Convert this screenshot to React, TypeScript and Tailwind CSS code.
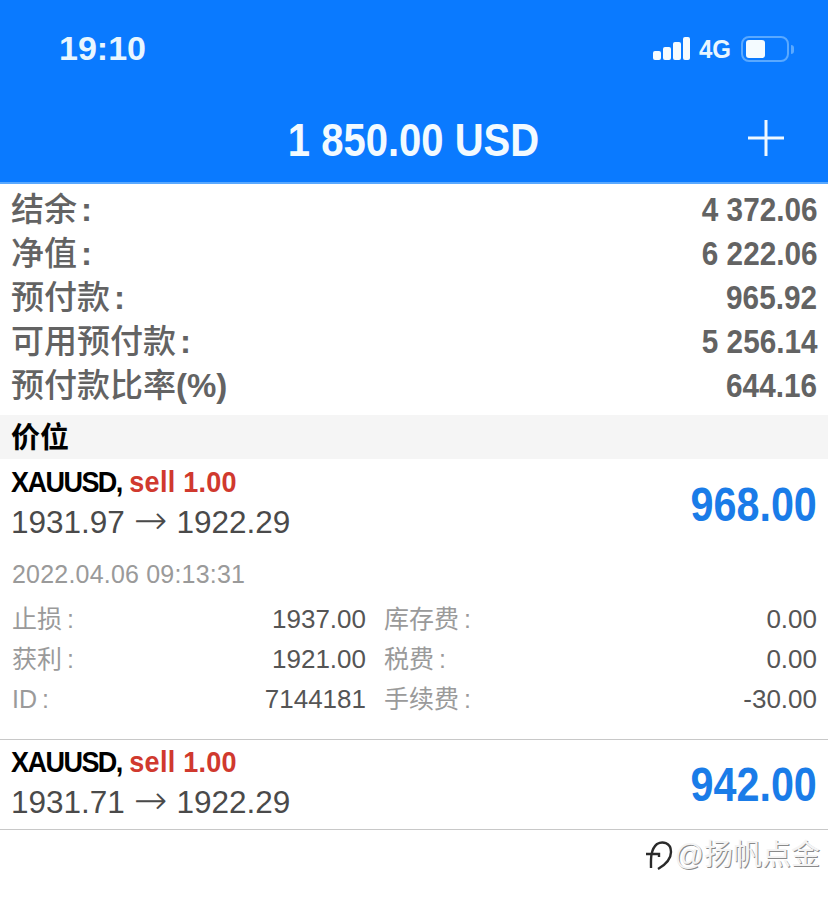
const summary = [
  ['结余', '4 372.06'],
  ['净值', '6 222.06'],
  ['预付款', '965.92'],
  ['可用预付款', '5 256.14'],
]

const details = [
  ['止损', '1937.00', '库存费', '0.00'],
  ['获利', '1921.00', '税费', '0.00'],
  ['ID', '7144181', '手续费', '-30.00'],
]

function StatusBar() {
  return (
    <div className="flex h-[96px] items-start justify-between pl-[59px] pr-[34px] pt-[29px]">
      <span className="text-[34px] leading-[38px] font-bold text-[#e8f6ff]">19:10</span>
      <div className="flex items-center pt-[7px]">
        <svg width="38" height="24" viewBox="0 0 38 24" className="fill-[#f6fcff]">
          <rect x="0" y="14" width="8" height="9" rx="2" />
          <rect x="10" y="10" width="8" height="13" rx="2" />
          <rect x="20" y="5" width="8" height="18" rx="2" />
          <rect x="30" y="0" width="7" height="23" rx="2" />
        </svg>
        <span className="ml-[8px] origin-left scale-y-[1.1] text-[24px] leading-[24px] font-bold text-[#e8f6ff]">4G</span>
        <div className="ml-[10px] flex h-[26px] w-[48px] items-center rounded-[8px] border-2 border-[#5aa9ff] p-[3px]">
          <div className="h-[18px] w-[19px] rounded-[3px] bg-[#f4fbff]" />
        </div>
        <div className="ml-[2px] h-[9px] w-[3px] rounded-r-full bg-[#5aa9ff]" />
      </div>
    </div>
  )
}

function Header() {
  return (
    <div className="h-[184px] border-b-2 border-[#5aa9ff] bg-[#0a7aff]">
      <StatusBar />
      <div className="relative flex h-[86px] items-center justify-center">
        <span className="mt-[2px] ml-[-2px] origin-center scale-x-[0.87] text-[46px] leading-[50px] font-bold whitespace-nowrap text-[#f2faff]">
          1 850.00 USD
        </span>
        <svg width="38" height="38" viewBox="0 0 38 38" className="absolute top-[23px] right-[43px] stroke-[#eef8ff]" strokeWidth="3">
          <path d="M19 1v36M1 19h36" />
        </svg>
      </div>
    </div>
  )
}

function PositionHead({ open, close, profit }: { open: string; close: string; profit: string }) {
  return (
    <div className="flex items-center justify-between pl-[11px] pr-[11px]">
      <div>
        <p className="h-[40px] origin-left scale-x-[0.9] text-[30px] leading-[40px] font-bold whitespace-nowrap text-black">
          <span className="tracking-[-1.7px]">XAUUSD,</span> <span className="tracking-[0.3px] text-[#d0392e]">sell 1.00</span>
        </p>
        <p className="flex h-[40px] items-center text-[31.5px] leading-[40px] whitespace-nowrap text-[#4a4a4a]">
          {open}
          <span className="mx-[9px] h-[40px] text-[40px] leading-[36px] font-['DejaVu_Sans'] font-extralight">→</span>
          {close}
        </p>
      </div>
      <span className="mt-[6px] origin-right scale-x-[0.86] text-[48px] leading-[52px] font-bold text-[#1a7ce8]">{profit}</span>
    </div>
  )
}

export default function App() {
  return (
    <div className="h-[903px] w-[828px] overflow-hidden bg-white font-['Liberation_Sans','Noto_Sans_CJK_SC',sans-serif]">
      <Header />

      <div className="pt-[3px] pb-[8px]">
        {summary.map(([label, value]) => (
          <div key={label} className="flex h-[44px] items-center justify-between pl-[11px] pr-[11px] pt-[1px]">
            <span className="text-[33px] leading-[44px] font-medium text-[#636363]">
              {label}
              <span className="ml-[4px] font-bold">:</span>
            </span>
            <span className="origin-right scale-x-[0.9] text-[33px] leading-[44px] font-bold text-[#636363]">{value}</span>
          </div>
        ))}
        <div className="flex h-[44px] items-center justify-between pl-[11px] pr-[11px] pt-[1px]">
          <span className="text-[33px] leading-[44px] font-medium text-[#636363]">
            预付款比率<span className="font-bold">(%)</span>
          </span>
          <span className="origin-right scale-x-[0.9] text-[33px] leading-[44px] font-bold text-[#636363]">644.16</span>
        </div>
      </div>

      <div className="flex h-[44px] items-center bg-[#f5f5f5] pt-[3px] pl-[11px] text-[29px] font-bold text-black">价位</div>

      <div className="pt-[3px]">
        <PositionHead open="1931.97" close="1922.29" profit="968.00" />
      </div>

      <p className="mt-[12px] h-[40px] pl-[12px] text-[25px] leading-[40px] tracking-[0.2px] text-[#9a9a9a]">2022.04.06 09:13:31</p>

      <div className="mt-[5px] pr-[11px] pl-[12px]">
        {details.map(([label, value, label2, value2]) => (
          <div key={label} className="flex h-[40px] items-center text-[26px] leading-[40px]">
            <span className="w-[100px] text-[25px] text-[#9a9a9a]">
              {label}
              <span className="ml-[5px]">:</span>
            </span>
            <span className="w-[254px] text-right text-[#555555]">{value}</span>
            <span className="ml-[18px] w-[140px] text-[25px] text-[#9a9a9a]">
              {label2}
              <span className="ml-[5px]">:</span>
            </span>
            <span className="flex-1 text-right text-[#555555]">{value2}</span>
          </div>
        ))}
      </div>

      <div className="mt-[20px] border-t border-[#c8c8c8] pt-[2px] pb-[7px]">
        <PositionHead open="1931.71" close="1922.29" profit="942.00" />
      </div>
      <div className="border-t border-[#c8c8c8]" />

      <div className="flex items-center justify-end pt-[6px] pr-[8px]">
        <svg width="28" height="32" viewBox="0 0 28 32" fill="none" className="stroke-[#2a2a2a]" strokeWidth="2.4">
          <path d="M6 29C6 21 5 11 12 5c5-3 14-2 14 8 0 7-6 13-13 17M1 15h13v3" />
        </svg>
        <span className="ml-[2px] text-[29px] leading-[38px] text-[#f4f4f4] [text-shadow:1px_1px_0_#8a8a8a]">@扬帆点金</span>
      </div>
    </div>
  )
}
